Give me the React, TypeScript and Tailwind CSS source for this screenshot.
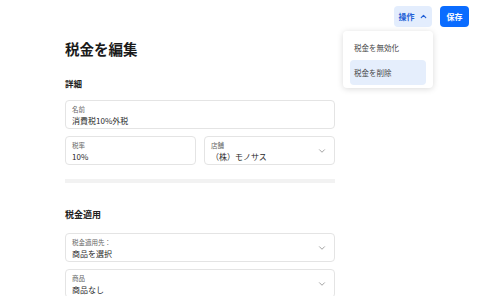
import React from "react";

const font = { fontFamily: '"Noto Sans CJK JP", "Noto Sans", sans-serif' };

function Chevron({ up = false, className = "", strokeWidth = 1.4 }: { up?: boolean; className?: string; strokeWidth?: number }) {
  return (
    <svg viewBox="0 0 12 12" className={className} fill="none" stroke="currentColor" strokeWidth={strokeWidth} strokeLinecap="round" strokeLinejoin="round">
      <path d={up ? "M3 7.5l3-3 3 3" : "M3 4.5l3 3 3-3"} />
    </svg>
  );
}

function Field({ label, value, select = false, className = "" }: { label: string; value: string; select?: boolean; className?: string }) {
  return (
    <div className={`flex h-[29px] items-center rounded-[4px] border border-[#e4e4e4] bg-white pl-[6px] pr-[7px] ${className}`}>
      <div className="flex min-w-0 flex-1 flex-col pt-[2px]">
        <span className="text-[6.5px] leading-[9px] text-[#666]">{label}</span>
        <span className="mt-[1px] text-[8px] leading-[12px] text-[#2a2a2a]">{value}</span>
      </div>
      {select && <Chevron className="h-[10px] w-[10px] text-[#999]" strokeWidth={1.1} />}
    </div>
  );
}

export default function App() {
  return (
    <div className="relative h-[296px] w-[477px] overflow-hidden bg-white" style={font}>
      {/* Header actions */}
      <div className="flex justify-end gap-[8px] pr-[8px] pt-[6px]">
        <button className="flex h-[21px] w-[38px] items-center justify-center gap-[4px] rounded-[4px] bg-[#e3edfd] text-[8px] font-bold text-[#1f5fd6]">
          <span>操作</span>
          <Chevron up className="h-[9px] w-[9px]" strokeWidth={1.6} />
        </button>
        <button className="flex h-[21px] w-[29px] items-center justify-center rounded-[4px] bg-[#0a6cff] text-[8px] font-bold text-white">
          保存
        </button>
      </div>

      {/* Dropdown menu */}
      <div className="absolute left-[343px] top-[31px] w-[90px] rounded-[4px] bg-white px-[7px] pb-[3px] pt-[4px] shadow-[0_1px_6px_rgba(0,0,0,0.15)]">
        <div className="flex h-[25px] items-center px-[4px] text-[7.5px] text-[#444]">税金を無効化</div>
        <div className="flex h-[25px] items-center rounded-[4px] bg-[#e5eefc] px-[4px] text-[7.5px] text-[#444]">税金を削除</div>
      </div>

      {/* Main form */}
      <div className="ml-[65px] w-[270px]">
        <h1 className="mt-[12px] text-[14.5px] font-semibold leading-[20px] text-[#1a1a1a]">税金を編集</h1>

        <h2 className="mt-[18px] text-[8.5px] font-bold leading-[12px] text-[#222]">詳細</h2>
        <Field className="mt-[11px]" label="名前" value="消費税10%外税" />
        <div className="mt-[7px] grid grid-cols-2 gap-[8px]">
          <Field label="税率" value="10%" />
          <Field label="店舗" value="（株）モノサス" select />
        </div>
        <div className="mt-[14px] h-[4px] bg-[#f2f2f2]" />

        <h2 className="mt-[26px] text-[9px] font-bold leading-[12px] text-[#222]">税金適用</h2>
        <Field className="mt-[12px]" label="税金適用先：" value="商品を選択" select />
        <Field className="mt-[7px]" label="商品" value="商品なし" select />
      </div>
    </div>
  );
}
